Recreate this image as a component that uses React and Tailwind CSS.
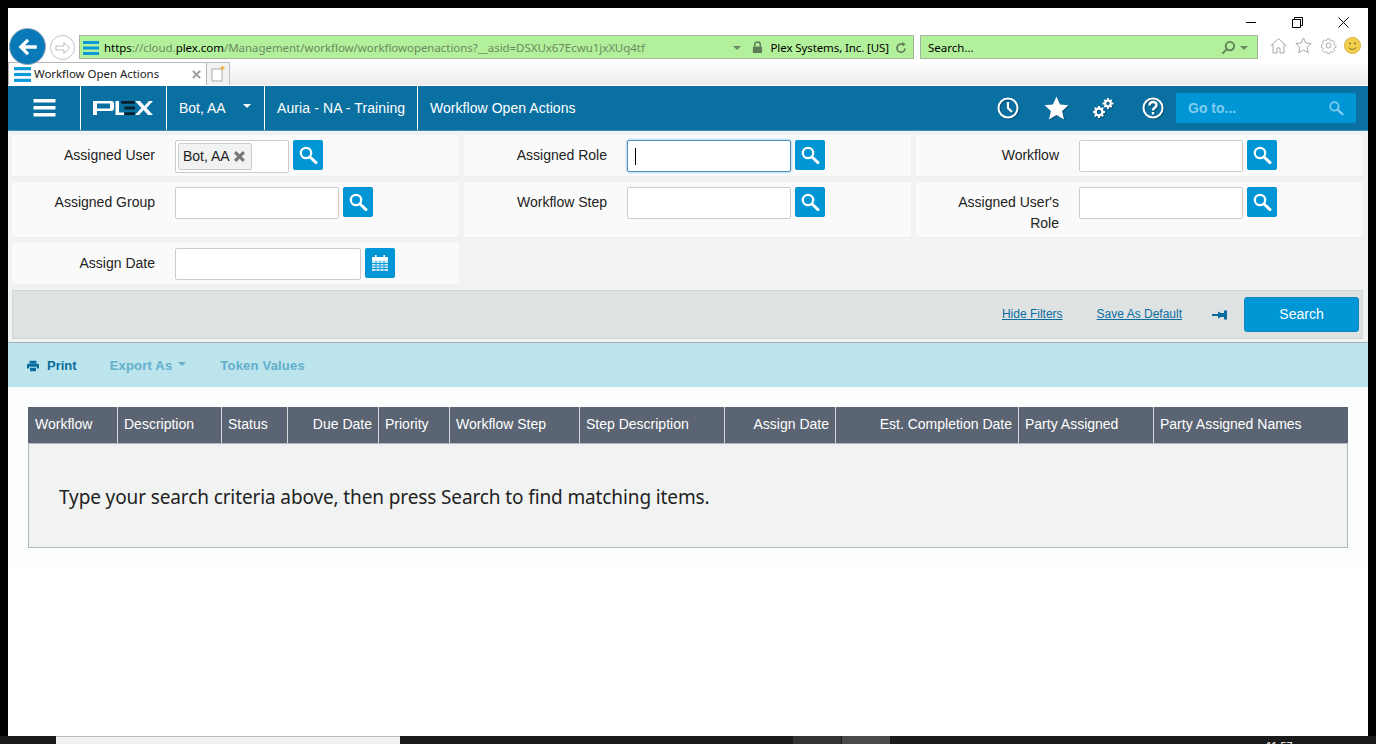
import React from "react";

const Ham = ({ className }) => (
  <svg viewBox="0 0 16 16" className={className} aria-hidden="true">
    <rect x="0" y="1" width="16" height="3" fill="#0a9bd8" />
    <rect x="0" y="6.5" width="16" height="3" fill="#0a9bd8" />
    <rect x="0" y="12" width="16" height="3" fill="#0a9bd8" />
  </svg>
);

const Mag = ({ className = "w-5 h-5", color = "white" }) => (
  <svg viewBox="0 0 20 20" className={className} fill="none" stroke={color} aria-hidden="true">
    <circle cx="8" cy="8" r="5.2" strokeWidth="2.2" />
    <path d="M12 12l6 5.6" strokeWidth="3" strokeLinecap="round" />
  </svg>
);

const SearchBtn = () => (
  <button className="w-[30px] h-[30px] rounded-[2px] bg-[#0096d6] flex items-center justify-center shrink-0">
    <Mag />
  </button>
);

const Calendar = () => (
  <button className="w-[30px] h-[30px] rounded-[2px] bg-[#0096d6] flex items-center justify-center shrink-0">
    <svg viewBox="0 0 18 18" className="w-[18px] h-[18px]" aria-hidden="true">
      <path d="M1 3h16v14H1z" fill="#cfeaf7" />
      <path d="M1 3h16v3.5H1z" fill="#ffffff" />
      <path d="M4 1h1.6v3H4zM12.4 1H14v3h-1.6z" fill="#ffffff" />
      <path d="M1 9.5h16M1 12h16M1 14.5h16M5 7v10M9 7v10M13 7v10" stroke="#0096d6" strokeWidth="0.9" />
    </svg>
  </button>
);

const Field = ({ label, w = "w-[164px]", children, h = "h-[42px]", icon = <SearchBtn />, inputH = "h-[32px]", focus }) => (
  <div className={`flex ${h} bg-[#fafafa] border-b border-[#eeeeee]`}>
    <div className="w-[143px] text-right text-[14px] leading-[21px] text-[#222] pt-[10px] shrink-0">{label}</div>
    <div className="flex items-start gap-[4px] pl-[20px] pt-[5px]">
      {children || (
        <div
          className={`${w} ${inputH} bg-white rounded-[2px] border ${
            focus ? "border-[#4d90c0] shadow-[0_0_3px_#7ab7dc]" : "border-[#cccccc]"
          } flex items-center pl-[7px]`}
        >
          {focus && <span className="w-px h-[17px] bg-black" />}
        </div>
      )}
      {icon}
    </div>
  </div>
);

const columns = [
  ["Workflow", 90, "left"],
  ["Description", 104, "left"],
  ["Status", 66, "left"],
  ["Due Date", 91, "right"],
  ["Priority", 71, "left"],
  ["Workflow Step", 130, "left"],
  ["Step Description", 145, "left"],
  ["Assign Date", 111, "right"],
  ["Est. Completion Date", 183, "right"],
  ["Party Assigned", 135, "left"],
  ["Party Assigned Names", 194, "left"],
];

export default function App() {
  return (
    <div className="w-[1376px] h-[744px] bg-black flex flex-col overflow-hidden font-['Liberation_Sans',sans-serif]">
      <div className="h-[8px] shrink-0" />
      <div className="flex-1 min-h-0 mx-[8px] bg-white flex flex-col">
        {/* browser chrome */}
        <div className="h-[54px] shrink-0 relative font-['Noto_Sans',sans-serif]">
          <div className="absolute right-[2px] top-0 flex items-center text-black">
            <div className="w-[46px] h-[28px] flex items-center justify-center">
              <span className="w-[10px] h-px bg-black mt-[1px]" />
            </div>
            <div className="w-[46px] h-[28px] flex items-center justify-center">
              <svg viewBox="0 0 11 11" className="w-[11px] h-[11px]" fill="none" stroke="black" aria-hidden="true">
                <path d="M.5 2.5h8v8h-8zM2.5 2.5v-2h8v8h-2" />
              </svg>
            </div>
            <div className="w-[46px] h-[28px] flex items-center justify-center">
              <svg viewBox="0 0 11 11" className="w-[11px] h-[11px]" stroke="black" aria-hidden="true">
                <path d="M.5.5l10 10M10.500.5l-10 10" />
              </svg>
            </div>
          </div>
          <div className="absolute left-[1px] top-[20px] w-[37px] h-[37px] rounded-full bg-[#0a79b8] border border-[#9ab] flex items-center justify-center z-10">
            <svg viewBox="0 0 20 20" className="w-[22px] h-[22px]" fill="none" stroke="white" strokeWidth="3" aria-hidden="true">
              <path d="M18 10H4M10 3.500L3.500 10l6.500 6.500" />
            </svg>
          </div>
          <div className="absolute left-[42px] top-[27px] w-[25px] h-[25px] rounded-full border border-[#c4c4c4] flex items-center justify-center">
            <svg viewBox="0 0 16 16" className="w-[16px] h-[16px]" fill="none" stroke="#bbbbbb" aria-hidden="true">
              <path d="M1 6h8V2.500L14.500 8 9 13.500V10H1z" />
            </svg>
          </div>
          <div className="absolute left-[71px] top-[27px] w-[835px] h-[24px] bg-[#b3f09b] border border-[#a6b3a0] flex items-center text-[11.5px] tracking-[-0.05px] pt-[1px]">
            <Ham className="w-[16px] h-[16px] ml-[3px] mr-[5px]" />
            <span className="text-[#6a8b62] whitespace-pre">
              <span className="text-black">https</span>://cloud.<span className="text-black">plex.com</span>/Management/workflow/workflowopenactions?__asid=DSXUx67Ecwu1jxXUq4tf
            </span>
            <div className="ml-auto flex items-center">
              <span className="w-0 h-0 border-x-[4px] border-x-transparent border-t-[4px] border-t-[#6a8b62] mr-[11px]" />
              <svg viewBox="0 0 12 14" className="w-[11px] h-[13px] mr-[8px]" aria-hidden="true">
                <path d="M3 6V4a3 3 0 016 0v2" fill="none" stroke="#5e7d56" strokeWidth="1.600" />
                <rect x="1" y="6" width="10" height="7" fill="#5e7d56" />
              </svg>
              <span className="text-black whitespace-nowrap mr-[6px] tracking-[-0.1px]">Plex Systems, Inc. [US]</span>
              <svg viewBox="0 0 12 12" className="w-[12px] h-[12px] mr-[6px]" fill="none" stroke="#5e7d56" strokeWidth="1.800" aria-hidden="true">
                <path d="M10 6.500A4 4 0 116 2.200h2" />
                <path d="M7.500 0v4.500L10.500 2.200z" fill="#5e7d56" stroke="none" />
              </svg>
            </div>
          </div>
          <div className="absolute left-[912px] top-[27px] w-[338px] h-[24px] bg-[#b3f09b] border border-[#a6b3a0] flex items-center text-[11.5px] pl-[7px] pr-[9px] pt-[1px]">
            <span className="text-black">Search...</span>
            <svg viewBox="0 0 16 16" className="w-[15px] h-[15px] ml-auto mr-[4px]" fill="none" stroke="#5e7d56" strokeWidth="2" aria-hidden="true">
              <circle cx="9.500" cy="6.500" r="4.500" />
              <path d="M6 10l-4.500 4.500" />
            </svg>
            <span className="w-0 h-0 border-x-[4px] border-x-transparent border-t-[4px] border-t-[#6a8b62]" />
          </div>
          <div className="absolute left-[1262px] top-[29px] flex items-center gap-[8px]">
            <svg viewBox="0 0 17 17" className="w-[17px] h-[17px]" fill="none" stroke="#a8a8a8" aria-hidden="true">
              <path d="M.5 9L8.500 1.500 16.500 9M3 7v9h4v-5h3v5h4V7" />
            </svg>
            <svg viewBox="0 0 17 17" className="w-[17px] h-[17px]" fill="none" stroke="#a8a8a8" aria-hidden="true">
              <path d="M8.500 1l2.300 5 5.400.6-4 3.700 1.100 5.400-4.800-2.700-4.800 2.700 1.100-5.400-4-3.700 5.400-.6z" />
            </svg>
            <svg viewBox="0 0 17 17" className="w-[17px] h-[17px]" fill="none" stroke="#a8a8a8" aria-hidden="true">
              <circle cx="8.500" cy="8.500" r="2.500" />
              <path d="M7 .7h3l.4 2 1.500.7 1.800-1 2 2.100-1 1.800.6 1.500 2 .4v2.600l-2 .4-.6 1.500 1 1.800-2 2.100-1.800-1-1.500.7-.4 1.600H7l-.4-1.600-1.500-.7-1.800 1-2-2.100 1-1.800-.6-1.500-1.500-.4V7.700l1.500-.4.6-1.500-1-1.800 2-2.100 1.800 1 1.500-.7z" transform="translate(1.300 1.300) scale(.85)" />
            </svg>
            <svg viewBox="0 0 17 17" className="w-[17px] h-[17px] -ml-[1px]" aria-hidden="true">
              <circle cx="8.500" cy="8.500" r="8" fill="#f2d04e" stroke="#d8b13a" />
              <circle cx="6" cy="6.500" r="1" fill="#7a6a20" />
              <circle cx="11" cy="6.500" r="1" fill="#7a6a20" />
              <path d="M4.500 10.500c2 2.500 6 2.500 8 0" fill="none" stroke="#7a6a20" />
            </svg>
          </div>
        </div>
        {/* tab strip */}
        <div className="h-[23px] shrink-0 flex bg-gradient-to-b from-white to-[#ebebeb] font-['Noto_Sans',sans-serif]">
          <div className="w-[199px] h-[23px] bg-white border border-b-0 border-[#b9b9b9] flex items-center text-[11.5px] tracking-[-0.05px] text-[#222] pl-[5px]">
            <Ham className="w-[17px] h-[17px] mr-[3px]" />
            <span className="whitespace-nowrap">Workflow Open Actions</span>
            <svg viewBox="0 0 10 10" className="w-[9px] h-[9px] ml-auto mr-[5px]" stroke="#9a9a9a" strokeWidth="2.200" aria-hidden="true">
              <path d="M1 1l8 8M9 1l-8 8" />
            </svg>
          </div>
          <div className="w-[23px] h-[23px] bg-[#f2f2f2] border border-b-0 border-l-0 border-[#c4c4c4] flex items-center justify-center">
            <svg viewBox="0 0 16 18" className="w-[16px] h-[18px]" aria-hidden="true">
              <path d="M2 4h10v12H2z" fill="white" stroke="#aaaaaa" />
              <path d="M12.500 0l.8 2.200 2.200.8-2.200.8-.8 2.200-.8-2.200-2.200-.8 2.200-.8z" fill="#f5a623" />
            </svg>
          </div>
        </div>
        {/* nav */}
        <div className="h-[45px] shrink-0 bg-[#0a70a2] border-t border-white flex items-stretch text-white text-[14px]">
          <div className="w-[73px] flex items-center justify-center border-r border-white shrink-0">
            <svg viewBox="0 0 22 18" className="w-[23px] h-[18px]" aria-hidden="true">
              <rect y="0" width="22" height="3.500" fill="white" />
              <rect y="7" width="22" height="3.500" fill="white" />
              <rect y="14" width="22" height="3.500" fill="white" />
            </svg>
          </div>
          <div className="w-[86px] flex items-center justify-center border-r border-white shrink-0 pr-[2px]">
            <svg viewBox="0 0 60 14" className="w-[60px] h-[14px]" aria-hidden="true">
              <path d="M0 0h18a3 3 0 013 3v4a3 3 0 01-3 3H4v4H0zM4 2.500v5h13v-5z" fill="white" fillRule="evenodd" />
              <path d="M22.500 0h3.500v11.500h5V14h-8.500z" fill="white" />
              <path d="M28 0h14v2.800H28zM31.500 5.600H42v2.800H31.500zM31.500 11.200H42V14H31.500z" fill="#06202e" />
              <path d="M42 0h5l4.500 5 4.500-5h4l-6.500 7 6.500 7h-5l-4.500-5-4.500 5h-4l6.500-7z" fill="white" />
            </svg>
          </div>
          <div className="w-[98px] flex items-center pl-[12px] border-r border-white shrink-0">
            Bot, AA
            <span className="ml-[17px] mb-[4px] w-0 h-0 border-x-[4px] border-x-transparent border-t-[4px] border-t-white" />
          </div>
          <div className="w-[153px] flex items-center pl-[12px] border-r border-white shrink-0 whitespace-nowrap tracking-[0.1px]">Auria - NA - Training</div>
          <div className="flex items-center pl-[12px] whitespace-nowrap tracking-[0.05px]">Workflow Open Actions</div>
          <div className="ml-auto flex items-center pr-[12px]">
            <svg viewBox="0 0 22 22" className="w-[22px] h-[22px] mr-[25px] drop-shadow-[1px_1px_0_rgba(0,0,0,0.3)]" fill="none" stroke="white" strokeWidth="2" aria-hidden="true">
              <circle cx="11" cy="11" r="9.500" />
              <path d="M11 5v6l4 4" strokeWidth="2.200" />
            </svg>
            <svg viewBox="0 0 24 24" className="w-[25px] h-[25px] mr-[23px] drop-shadow-[1px_1px_0_rgba(0,0,0,0.3)]" fill="white" aria-hidden="true">
              <path d="M12 .5l3.400 7.600 8.100.8-6.100 5.500 1.800 8.100L12 18.300l-7.200 4.200 1.800-8.100L.5 8.900l8.100-.8z" />
            </svg>
            <svg viewBox="0 0 22 22" className="w-[22px] h-[22px] mr-[28px] drop-shadow-[1px_1px_0_rgba(0,0,0,0.3)]" fill="none" stroke="white" aria-hidden="true">
              <circle cx="7" cy="15" r="3.500" strokeWidth="2.500" />
              <path d="M7 9v2.500M7 18.500V21M1 15h2.500M10.500 15H13M2.800 10.800l1.800 1.800M9.400 17.400l1.800 1.800M11.200 10.800l-1.800 1.800M4.600 17.400l-1.800 1.800" strokeWidth="2" />
              <circle cx="16" cy="6.500" r="2.800" strokeWidth="2.200" />
              <path d="M16 1v2M16 10v2M10.500 6.500h2M19.500 6.500h2M12.300 2.800l1.400 1.400M18.300 8.800l1.400 1.400M19.700 2.800l-1.400 1.400M13.700 8.800l-1.400 1.400" strokeWidth="1.800" />
            </svg>
            <svg viewBox="0 0 22 22" className="w-[22px] h-[22px] mr-[12px] drop-shadow-[1px_1px_0_rgba(0,0,0,0.3)]" fill="none" stroke="white" strokeWidth="2" aria-hidden="true">
              <circle cx="11" cy="11" r="9.500" />
              <path d="M7.500 8.500C7.500 6 9.200 5 11 5s3.500 1.100 3.500 3c0 2.800-3.500 2.700-3.500 5.500" strokeWidth="2.400" />
              <path d="M9.800 15h2.400v2.500H9.800z" fill="white" stroke="none" />
            </svg>
            <div className="w-[180px] h-[30px] rounded-[2px] bg-[#0096d6] flex items-center px-[12px] text-[14px] font-bold text-[#7fcdee]">
              <span className="pt-[1px]">Go to...</span>
              <Mag className="w-[16px] h-[16px] ml-auto" color="#7fcdee" />
            </div>
          </div>
        </div>
        {/* filters */}
        <div className="h-[213px] shrink-0 bg-[#f1f2f2] border-t border-[#3d8fb8] flex flex-col pt-[4px] border-b border-b-[#a9b0b3]">
          <div className="grid grid-cols-[447px_447px_447px] gap-x-[5px] gap-y-[5px] pl-[4px]">
            <Field
              label="Assigned User"
              children={
                <div className="w-[114px] h-[33px] bg-white rounded-[2px] border border-[#cccccc] pl-[2px] pt-[2px] flex items-start">
                  <div className="h-[27px] w-[74px] rounded-[2px] bg-[#f1f3f2] border border-[#cccccc] flex items-center pl-[4px] text-[14px] text-[#222] gap-[4px]">
                    Bot, AA
                    <svg viewBox="0 0 10 10" className="w-[11px] h-[11px]" stroke="#777777" strokeWidth="2.800" aria-hidden="true">
                      <path d="M1 1l8 8M9 1l-8 8" />
                    </svg>
                  </div>
                </div>
              }
            />
            <Field label="Assigned Role" focus />
            <Field label="Workflow" />
            <Field label="Assigned Group" h="h-[56px]" />
            <Field label="Workflow Step" h="h-[56px]" />
            <Field label={<>Assigned User's<br />Role</>} h="h-[56px]" />
            <Field label="Assign Date" w="w-[186px]" icon={<Calendar />} />
          </div>
          <div className="mt-[5px] ml-[4px] mr-[5px] h-[49px] bg-[#dfe2e3] border border-[#d3d6d7] flex items-center justify-end pr-[3px] text-[12px] text-[#0a6d9e]">
            <a className="underline mr-[34px] mb-[1px]">Hide Filters</a>
            <a className="underline mr-[30px] mb-[1px]">Save As Default</a>
            <svg viewBox="0 0 16 12" className="w-[16px] h-[12px] mr-[16px]" fill="#0a6d9e" aria-hidden="true">
              <path d="M0 5h8v2H0zM6 2.500l3 1.500h3V1.500h3v9h-3V8H9l-3 1.500z" />
            </svg>
            <button className="w-[115px] h-[35px] rounded-[3px] bg-[#0096d6] border border-[#0a86bd] text-white text-[14px]">Search</button>
          </div>
        </div>
        {/* toolbar */}
        <div className="h-[44px] shrink-0 bg-[#bce4ec] flex items-center text-[13px] font-bold pl-[19px] pt-[1px]">
          <svg viewBox="0 0 14 12" className="w-[12px] h-[12px] mr-[8px]" fill="#0a6d9e" aria-hidden="true">
            <path d="M3 0h8v3H3zM1 3.500h12a1 1 0 011 1V9h-2.500V7h-9v2H0V4.500a1 1 0 011-1zM3.500 8h7v4h-7z" />
          </svg>
          <span className="text-[#0a6d9e] mr-[33px]">Print</span>
          <span className="text-[#62aecb] tracking-[0.2px]">Export As</span>
          <span className="ml-[6px] mb-[4px] w-0 h-0 border-x-[4px] border-x-transparent border-t-[4px] border-t-[#62aecb] mr-[34px]" />
          <span className="text-[#62aecb] tracking-[0.2px]">Token Values</span>
        </div>
        {/* table */}
        <div className="px-[20px] pt-[20px] h-[180px] shrink-0 bg-[#fcfefd] flex flex-col">
          <div className="w-[1320px] h-[36px] flex bg-[#5a6472] text-white text-[14px] shrink-0">
            {columns.map(([name, width, align], i) => (
              <div
                key={name}
                style={{ width }}
                className={`h-full flex items-center px-[6px] pb-[2px] whitespace-nowrap shrink-0 ${
                  align === "right" ? "justify-end" : i === 0 ? "pl-[7px]" : ""
                } ${i < columns.length - 1 ? "border-r border-[#d5d9dc]" : ""}`}
              >
                {name}
              </div>
            ))}
          </div>
          <div className="w-[1320px] h-[105px] shrink-0 bg-[#f1f3f2] border border-[#b2b7bb] flex items-center pl-[30px] pt-[4px] text-[19px] tracking-[-0.12px] text-[#222] font-['Noto_Sans',sans-serif]">
            Type your search criteria above, then press Search to find matching items.
          </div>
        </div>
      </div>
      {/* taskbar */}
      <div className="h-[8px] shrink-0 bg-[#1a1a1a] flex relative">
        <div className="ml-[56px] w-[344px] bg-[#f0f0f0] border-t border-[#bbbbbb]" />
        <div className="ml-[393px] w-[48px] bg-[#333333]" />
        <div className="w-[48px] bg-[#4a4a4a] ml-px" />
        <div className="absolute left-[1266px] top-[5px] text-[11px] leading-none text-white">11:57</div>
      </div>
    </div>
  );
}
